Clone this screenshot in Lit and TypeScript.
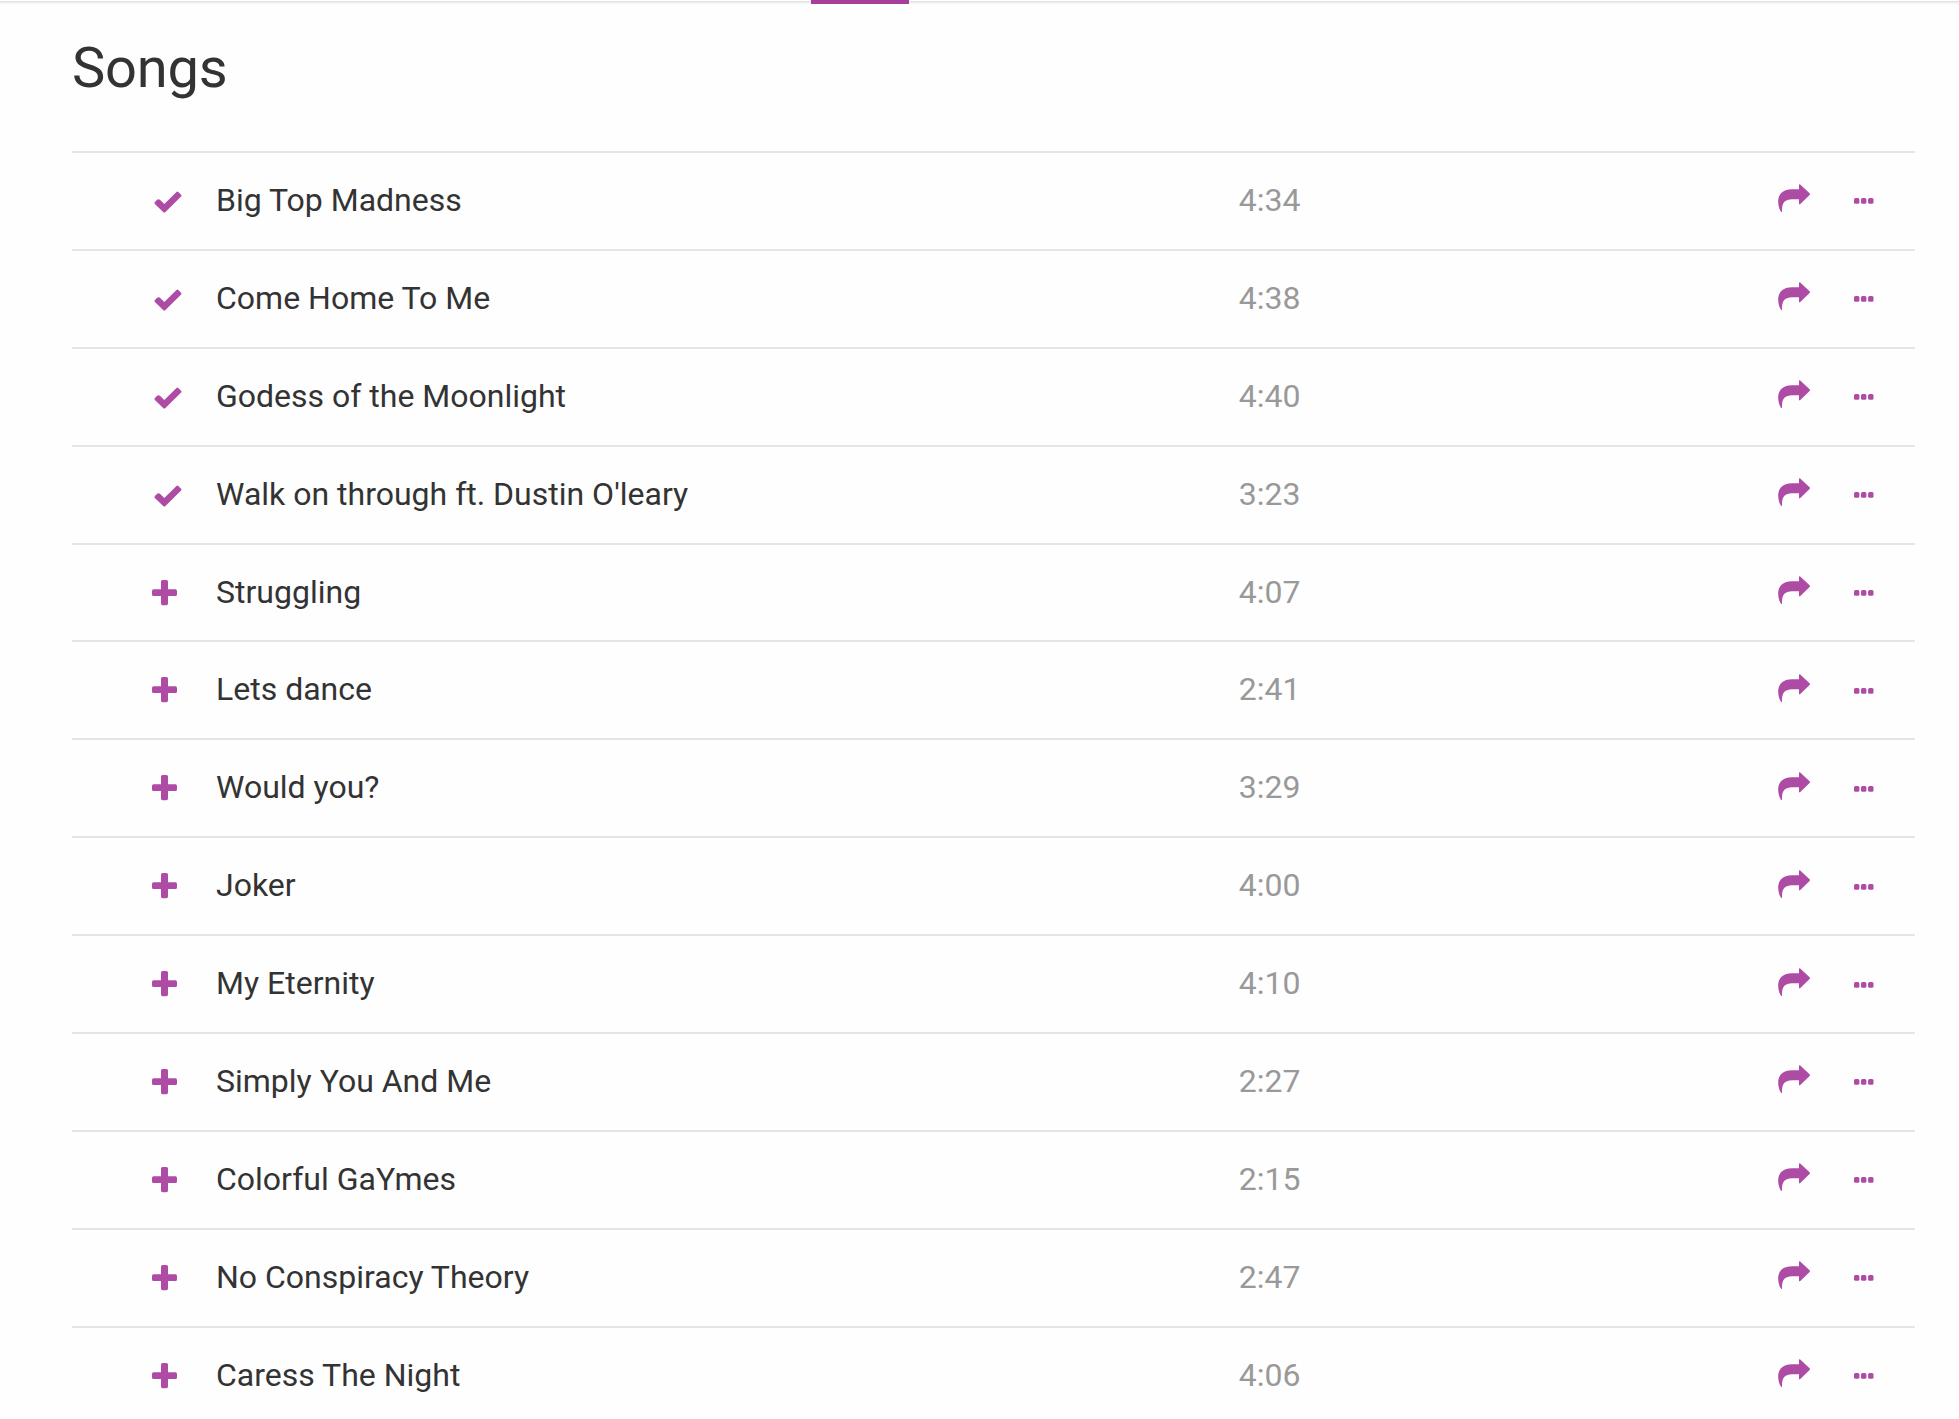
import { LitElement, html, css, svg } from "lit";
import { customElement, property } from "lit/decorators.js";

interface Song {
    title: string;
    length: string;
    added?: boolean;
}

const songs: Song[] = [
    { title: "Big Top Madness", length: "4:34", added: true },
    { title: "Come Home To Me", length: "4:38", added: true },
    { title: "Godess of the Moonlight", length: "4:40", added: true },
    { title: "Walk on through ft. Dustin O'leary", length: "3:23", added: true },
    { title: "Struggling", length: "4:07" },
    { title: "Lets dance", length: "2:41" },
    { title: "Would you?", length: "3:29" },
    { title: "Joker", length: "4:00" },
    { title: "My Eternity", length: "4:10" },
    { title: "Simply You And Me", length: "2:27" },
    { title: "Colorful GaYmes", length: "2:15" },
    { title: "No Conspiracy Theory", length: "2:47" },
    { title: "Caress The Night", length: "4:06" },
];

const check = svg`<path d="M2.9 9.1 L0.9 11.1 Q0 12 0.9 12.9 L9.4 21.2 Q10.3 22 11.2 21.2 L27.1 5.5 Q28 4.6 27.1 3.7 L24.3 0.9 Q23.4 0 22.5 0.9 L10.3 13 L6.2 9.1 Q5.3 8.2 4.4 8.2 Q3.6 8.3 2.9 9.1 Z"/>`;
const plus = svg`<path d="M10.6 0 H14.4 Q16 0 16 1.6 V9.3 H23.4 Q25 9.3 25 10.9 V14.4 Q25 16 23.4 16 H16 V23.6 Q16 25.2 14.4 25.2 H10.6 Q9 25.2 9 23.6 V16 H1.6 Q0 16 0 14.4 V10.9 Q0 9.3 1.6 9.3 H9 V1.6 Q9 0 10.6 0 Z"/>`;
const share = svg`<path d="M21 1 Q21 -0.3 22.2 0.6 L31.6 9.2 Q32.4 10 31.6 10.9 L22.3 20 Q21 21 21 19.6 V15.2 H14 C7 15.4 3.7 18.5 4 27.2 Q4 28.6 3 27.7 C1.2 25 0 20.5 0.2 16.5 C0.8 9 5.5 5.5 14 5.2 H21 Z"/>`;
const dots = svg`<rect width="5.4" height="5.8" rx="1.5"/><rect x="7" width="5.4" height="5.8" rx="1.5"/><rect x="14.1" width="5.4" height="5.8" rx="1.5"/>`;

@customElement("song-row")
export class SongRow extends LitElement {
    @property({ attribute: false }) song!: Song;

    static styles = css`
        :host {
            display: grid;
            grid-template-columns: 144px 1022.8px 1fr 76px 60.6px;
            align-items: center;
            box-sizing: border-box;
            height: 97.9px;
            border-top: 2px solid #e3e6e6;
            font-size: 32px;
            line-height: 38px;
        }

        svg {
            display: block;
            fill: #ae4ba5;
        }

        .check {
            margin: 2px 0 0 82px;
        }

        .plus {
            margin-left: 80px;
        }

        .share {
            margin-bottom: 4px;
        }

        .dots {
            margin-top: 1px;
        }

        .title,
        .length {
            margin-bottom: 2px;
        }

        .title {
            color: #333;
        }

        .length {
            color: #999;
        }
    `;

    render() {
        return html`
            ${this.song.added
                ? html`<svg class="check" width="28" height="22">${check}</svg>`
                : html`<svg class="plus" width="25" height="26">${plus}</svg>`}
            <span class="title">${this.song.title}</span>
            <span class="length">${this.song.length}</span>
            <svg class="share" width="33" height="29">${share}</svg>
            <svg class="dots" width="20" height="6">${dots}</svg>
        `;
    }
}

@customElement("app-root")
export class AppRoot extends LitElement {
    static styles = css`
        :host {
            display: block;
            height: 1419px;
            overflow: hidden;
            background: #fefefe;
            font-family: Roboto, sans-serif;
        }

        .tabs {
            height: 4px;
            padding-left: 811px;
            background: linear-gradient(#fefefe 1px, #e0e0e0 1px, #e6e6e6 2px, #ececec 2px, #f8f8f8 4px);
        }

        .active {
            width: 98px;
            height: 4px;
            background: #a53f9b;
        }

        h1 {
            margin: 0;
            padding: 31px 0 50px 72px;
            font-size: 56px;
            font-weight: 400;
            line-height: 66px;
            letter-spacing: -0.2px;
            color: #333;
        }

        .songs {
            margin: 0 44.5px 0 72px;
        }
    `;

    render() {
        return html`
            <div class="tabs"><div class="active"></div></div>
            <h1>Songs</h1>
            <div class="songs">
                ${songs.map(song => html`<song-row .song=${song}></song-row>`)}
            </div>
        `;
    }
}
